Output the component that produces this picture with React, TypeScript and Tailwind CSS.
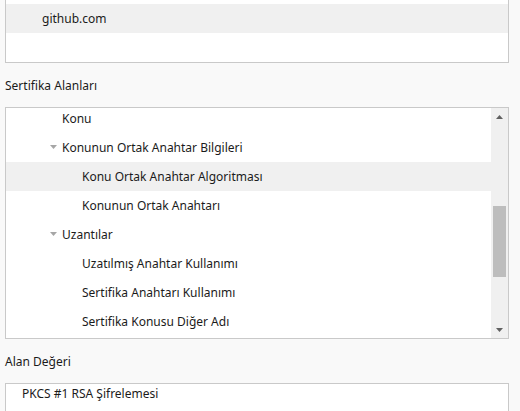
import React from "react";

type Row = { label: string; level: number; expanded?: boolean; selected?: boolean };

const rows: Row[] = [
  { label: "Konu", level: 1 },
  { label: "Konunun Ortak Anahtar Bilgileri", level: 1, expanded: true },
  { label: "Konu Ortak Anahtar Algoritması", level: 2, selected: true },
  { label: "Konunun Ortak Anahtarı", level: 2 },
  { label: "Uzantılar", level: 1, expanded: true },
  { label: "Uzatılmış Anahtar Kullanımı", level: 2 },
  { label: "Sertifika Anahtarı Kullanımı", level: 2 },
  { label: "Sertifika Konusu Diğer Adı", level: 2 },
];

function Caret() {
  return (
    <svg width="7" height="4" viewBox="0 0 7 4" className="absolute left-[-12px] top-[12px]">
      <path d="M0 0 H7 L3.5 4 Z" fill="#a6a6a6" />
    </svg>
  );
}

export default function App() {
  return (
    <div
      className="w-[520px] h-[411px] overflow-hidden bg-[#f9f9f9] text-[12px] text-[#1b1b1b] px-[5px]"
      style={{ fontFamily: '"Noto Sans", "Open Sans", sans-serif' }}
    >
      {/* Subject alternative names list (scrolled) */}
      <div className="w-[504px] h-[63px] bg-white border-x border-b border-[#c9c9c9] pt-[4px]">
        <div className="h-[29px] bg-[#f0f0f0] flex items-center pl-[36px]">github.com</div>
      </div>

      <div className="mt-[15px] mb-[13px] h-[16px] leading-[16px]">Sertifika Alanları</div>

      {/* Certificate fields tree */}
      <div className="w-[504px] h-[232px] bg-white border border-[#c9c9c9] flex overflow-hidden">
        <div className="flex-1 overflow-hidden">
          <div className="mt-[-4px]">
            {rows.map((r) => (
              <div
                key={r.label}
                className={`h-[29px] flex items-center ${r.selected ? "bg-[#f0f0f0]" : ""}`}
              >
                <span className={`relative ${r.level === 1 ? "ml-[56px]" : "ml-[76px]"} leading-[29px]`}>
                  {r.expanded && <Caret />}
                  {r.label}
                </span>
              </div>
            ))}
          </div>
        </div>
        <div className="w-[17px] bg-[#f0f0f0] flex flex-col items-center">
          <svg width="7" height="4" viewBox="0 0 7 4" className="mt-[7px]">
            <path d="M0 4 L3.5 0 L7 4 Z" fill="#606060" />
          </svg>
          <div className="mt-[87px] w-[13px] h-[71px] bg-[#bdbdbd]" />
          <div className="flex-1" />
          <svg width="7" height="4" viewBox="0 0 7 4" className="mb-[6px]">
            <path d="M0 0 H7 L3.5 4 Z" fill="#606060" />
          </svg>
        </div>
      </div>

      <div className="mt-[15px] mb-[13px] h-[16px] leading-[16px]">Alan Değeri</div>

      {/* Field value */}
      <div className="w-[504px] h-[40px] bg-white border border-[#c9c9c9] pl-[16px] pt-[1px] leading-[18px]">
        PKCS #1 RSA Şifrelemesi
      </div>
    </div>
  );
}
